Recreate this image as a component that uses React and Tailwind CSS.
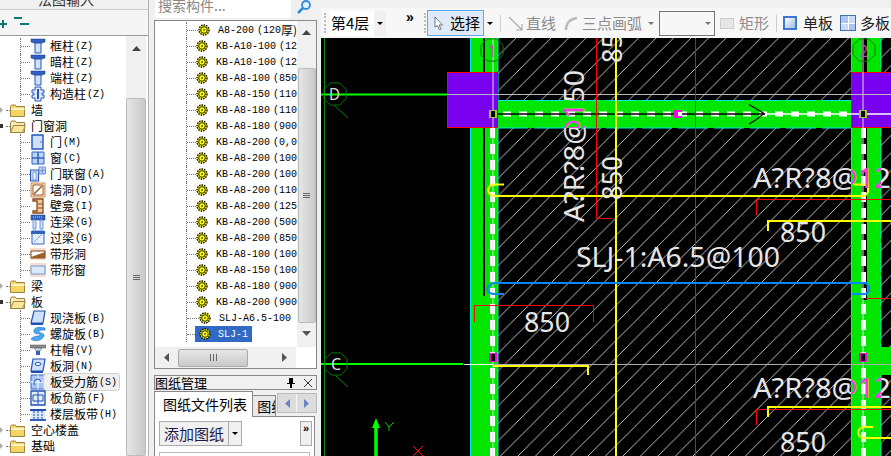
const cjk = "font-['Noto_Sans_CJK_SC',sans-serif]"
const mono = "font-['Liberation_Mono','Noto_Sans_CJK_SC',monospace]"

function Col() {
  return (
    <svg width="16" height="16" viewBox="0 0 16 16">
      <path d="M1 1h14v3l-3 1H4L1 4z" fill="#2f62c0" stroke="#16357f" strokeWidth=".5" />
      <path d="M5 5h6v10H5z" fill="#cfe0fa" stroke="#2556b8" />
    </svg>
  )
}

function Icon({ type }) {
  if (type === 'col') return <Col />
  if (type === 'gz') return (
    <svg width="16" height="16" viewBox="0 0 16 16">
      <path d="M5 1h6v3h3v3h-2v2h2v3h-3v3H5v-3H2V9h2V7H2V4h3z" fill="#dfe9fb" stroke="#2556b8" />
      <path d="M8 3v10" stroke="#2556b8" strokeWidth="2" />
    </svg>
  )
  if (type === 'door') return (
    <svg width="16" height="16" viewBox="0 0 16 16">
      <path d="M2 1h11v14H2z" fill="#cfe0fa" stroke="#2556b8" strokeWidth="1.4" />
      <path d="M10.500 8h1" stroke="#123" />
    </svg>
  )
  if (type === 'win') return (
    <svg width="16" height="16" viewBox="0 0 16 16">
      <path d="M2 2h12v12H2z" fill="#bcd4f7" stroke="#2f62c0" />
      <path d="M8 2v12M2 8h12" stroke="#2f62c0" strokeWidth="1.500" />
    </svg>
  )
  if (type === 'dw') return (
    <svg width="16" height="16" viewBox="0 0 16 16">
      <path d="M0.500 4h8v11h-8z" fill="#d7e5fb" stroke="#2556b8" strokeWidth="1.200" />
      <path d="M3 6h3v8H3z" fill="#fff" stroke="#2556b8" strokeWidth=".6" />
      <path d="M9 1h6.500v7H9z" fill="#bcd4f7" stroke="#6f94d8" />
      <path d="M12.300 1v7M9 4.500h6.500" stroke="#6f94d8" />
    </svg>
  )
  if (type === 'wh') return (
    <svg width="16" height="16" viewBox="0 0 16 16">
      <path d="M1 1h14v14H1z" fill="#f5dcc4" stroke="#c98f5a" />
      <path d="M3 3h10v10H3z" fill="#fff" stroke="#9c5a25" />
      <path d="M4 12l8-8" stroke="#8a5a2a" strokeWidth="1.500" />
    </svg>
  )
  if (type === 'bk') return (
    <svg width="16" height="16" viewBox="0 0 16 16">
      <path d="M3 1h10v14H3v-2h4V3H3z" fill="#f0c9a0" stroke="#8a4a18" strokeWidth="1.300" />
      <path d="M8 6h5M8 10h5" stroke="#8a4a18" />
    </svg>
  )
  if (type === 'll') return (
    <svg width="16" height="16" viewBox="0 0 16 16">
      <path d="M1 1h14v5H1z" fill="#2f62c0" stroke="#16357f" strokeWidth=".5" />
      <path d="M3 6h3v9H3zM10 6h3v9h-3z" fill="#cfe0fa" stroke="#6f94d8" />
      <path d="M3 3h10" stroke="#cfe0fa" strokeDasharray="1 1" />
    </svg>
  )
  if (type === 'gl') return (
    <svg width="16" height="16" viewBox="0 0 16 16">
      <path d="M2 1h12v13H2z" fill="#e8f0fc" stroke="#2f62c0" />
      <path d="M1 1h14v3H1z" fill="#2f62c0" />
      <path d="M4 12l8-8" stroke="#7aa0e0" />
    </svg>
  )
  if (type === 'dxd') return (
    <svg width="16" height="16" viewBox="0 0 16 16">
      <path d="M0 2h16v12H0z" fill="#f7dcc8" />
      <path d="M1 5h14v7H1z" fill="#fff" stroke="#7a4a20" />
      <path d="M1 11l14-5v6H1z" fill="#9c5f2c" />
    </svg>
  )
  if (type === 'dxc') return (
    <svg width="16" height="16" viewBox="0 0 16 16">
      <path d="M0 1h16v14H0z" fill="#f7dcd0" />
      <path d="M1 4h14v8H1z" fill="#dce9fb" stroke="#6f94d8" />
    </svg>
  )
  if (type === 'xjb') return (
    <svg width="16" height="16" viewBox="0 0 16 16">
      <path d="M4 1h11l-2 12H1z" fill="#cfe0fa" stroke="#1f4fb0" strokeWidth="1.200" />
      <path d="M1 13h12v2H1z" fill="#1f4fb0" />
    </svg>
  )
  if (type === 'lxb') return (
    <svg width="16" height="16" viewBox="0 0 16 16">
      <path d="M15 2C8 0 3 2 4 6c1 3 6 1 6 3 0 2-6 0-9 4 3 3 11 2 13-3 1-3-5-3-5-4 0-2 3-2 6-2z" fill="#4aa6ee" stroke="#1f6fc8" strokeWidth=".6" />
    </svg>
  )
  if (type === 'zm') return (
    <svg width="16" height="16" viewBox="0 0 16 16">
      <path d="M0 3h16v3H0z" fill="#8a8a8a" stroke="#555" strokeWidth=".5" />
      <path d="M4 6h8l-2 3H6z" fill="#c8d4ea" stroke="#555" strokeWidth=".5" />
      <path d="M6 9h4v4H6z" fill="#2f62c0" />
    </svg>
  )
  if (type === 'bd') return (
    <svg width="16" height="16" viewBox="0 0 16 16">
      <path d="M3 1h12l-2 12H1z" fill="#cfe0fa" stroke="#1f4fb0" strokeWidth="1.200" />
      <ellipse cx="8" cy="6" rx="3" ry="1.500" fill="#fff" stroke="#1f4fb0" />
      <path d="M1 13h12v2H1z" fill="#1f4fb0" />
    </svg>
  )
  if (type === 'bs') return (
    <svg width="16" height="16" viewBox="0 0 16 16">
      <path d="M1 1h14v14H1z" fill="#a9c6f3" stroke="#2f62c0" />
      <path d="M1 8h14M8 1v14" stroke="#eaf1fd" strokeWidth="1.300" />
      <path d="M5 11a3.500 3.500 0 1 1 6-3" fill="none" stroke="#1f4fb0" />
    </svg>
  )
  if (type === 'bf') return (
    <svg width="16" height="16" viewBox="0 0 16 16">
      <path d="M1 1h14v14H1z" fill="#e3edfc" stroke="#1f4fb0" strokeWidth="1.300" />
      <path d="M3 5h10v6H3zM8 2v12" fill="none" stroke="#1f4fb0" />
    </svg>
  )
  return (
    <svg width="16" height="16" viewBox="0 0 16 16">
      <path d="M0 3h16v2H0z" fill="#1f4fb0" />
      <path d="M0 13h16v2H0z" fill="#2f62c0" />
      <path d="M1 5h14v8H1z" fill="#dce9fb" />
      <path d="M4 5v8M8 5v8M12 5v8" stroke="#1f4fb0" strokeDasharray="2 1" />
    </svg>
  )
}

function Folder({ open }) {
  return (
    <svg width="16" height="13" viewBox="0 0 16 13">
      <path d="M0.500 2.500l1-1.500h4l1 1.500h8v10h-14z" fill={open ? '#f9e7b0' : '#f6d565'} stroke="#9a8448" />
      {open ? <path d="M0.500 12.500l3-7h12l-3 7z" fill="#fbe49a" stroke="#9a8448" /> : <path d="M1.500 4h13v2h-13z" fill="#fdf2c4" />}
    </svg>
  )
}

function Gear() {
  return (
    <svg width="12" height="12" viewBox="0 0 12 12">
      <circle cx="6" cy="6" r="5" fill="#ffff00" stroke="#000" strokeWidth="1.300" strokeDasharray="1.500 1" />
      <circle cx="6" cy="6" r="3.300" fill="#ffff00" stroke="#222" />
      <circle cx="6" cy="6" r="1" fill="#555" />
    </svg>
  )
}

function Tri({ dir = 'down', color = '#333' }) {
  const d = { up: 'M0 5L4.500 0 9 5z', down: 'M0 0L4.500 5 9 0z', left: 'M5 0v9L0 4.500z', right: 'M0 0v9l5-4.500z' }[dir]
  return (
    <svg width={dir === 'left' || dir === 'right' ? 5 : 9} height={dir === 'left' || dir === 'right' ? 9 : 5} viewBox={dir === 'left' || dir === 'right' ? '0 0 5 9' : '0 0 9 5'}>
      <path d={d} fill={color} />
    </svg>
  )
}

function Caret({ color = 'border-t-black' }) {
  return <span className={`w-0 h-0 border-x-[3px] border-x-transparent border-t-[3px] ${color}`} />
}

const Grip = () => (
  <span className="flex flex-col gap-[1px] w-[7px] items-center">
    <span className="w-[7px] h-[1px] bg-[#666]" />
    <span className="w-[7px] h-[1px] bg-[#666]" />
    <span className="w-[7px] h-[1px] bg-[#666]" />
  </span>
)

const leftTree = [
  { c: 1, icon: 'col', name: '框柱', key: '(Z)' },
  { c: 1, icon: 'col', name: '暗柱', key: '(Z)' },
  { c: 1, icon: 'col', name: '端柱', key: '(Z)' },
  { c: 1, icon: 'gz', name: '构造柱', key: '(Z)' },
  { name: '墙' },
  { name: '门窗洞', open: true },
  { c: 1, icon: 'door', name: '门', key: '(M)' },
  { c: 1, icon: 'win', name: '窗', key: '(C)' },
  { c: 1, icon: 'dw', name: '门联窗', key: '(A)' },
  { c: 1, icon: 'wh', name: '墙洞', key: '(D)' },
  { c: 1, icon: 'bk', name: '壁龛', key: '(I)' },
  { c: 1, icon: 'll', name: '连梁', key: '(G)' },
  { c: 1, icon: 'gl', name: '过梁', key: '(G)' },
  { c: 1, icon: 'dxd', name: '带形洞' },
  { c: 1, icon: 'dxc', name: '带形窗' },
  { name: '梁' },
  { name: '板', open: true },
  { c: 1, icon: 'xjb', name: '现浇板', key: '(B)' },
  { c: 1, icon: 'lxb', name: '螺旋板', key: '(B)' },
  { c: 1, icon: 'zm', name: '柱帽', key: '(V)' },
  { c: 1, icon: 'bd', name: '板洞', key: '(N)' },
  { c: 1, icon: 'bs', name: '板受力筋', key: '(S)', hot: true },
  { c: 1, icon: 'bf', name: '板负筋', key: '(F)' },
  { c: 1, icon: 'ld', name: '楼层板带', key: '(H)' },
  { name: '空心楼盖' },
  { name: '基础' },
]

const midTree = [
  ['A8-200', '(120', '厚)'],
  ['KB-A10-100', '(12'],
  ['KB-A10-100', '(12'],
  ['KB-A8-100', '(850'],
  ['KB-A8-150', '(110'],
  ['KB-A8-180', '(110'],
  ['KB-A8-180', '(900'],
  ['KB-A8-200', '(0,0'],
  ['KB-A8-200', '(100'],
  ['KB-A8-200', '(100'],
  ['KB-A8-200', '(110'],
  ['KB-A8-200', '(125'],
  ['KB-A8-200', '(500'],
  ['KB-A8-200', '(850'],
  ['KB-A8-100', '(100'],
  ['KB-A8-150', '(100'],
  ['KB-A8-180', '(900'],
  ['KB-A8-200', '(900'],
  ['SLJ-A6.5-100', ''],
]

function LeftRow({ row }) {
  if (row.c) {
    return (
      <div className="h-[16px] ml-[20px] flex items-center border-l border-dotted border-[#777]">
        <span className="w-[9px] border-t border-dotted border-[#777]" />
        <span className="w-[16px] h-[16px] shrink-0"><Icon type={row.icon} /></span>
        <span className={`ml-[-2px] pl-[6px] pr-[2px] h-[16px] flex items-center whitespace-nowrap rounded-[2px] ${row.hot ? 'bg-[#f0f0f0] outline outline-[#d0d0d0]' : ''}`}>
          <span className={`${cjk} text-[12px] text-black`}>{row.name}</span>
          {row.key && <span className={`${mono} text-[10px] ml-[1px] text-black`}>{row.key}</span>}
        </span>
      </div>
    )
  }
  return (
    <div className="h-[16px] flex items-center">
      <span className="w-[3px] flex justify-start">
        {row.open
          ? <span className="w-[3px] h-[4px] bg-[#333]" />
          : <span className="w-0 h-0 border-y-[3px] border-y-transparent border-l-[3px] border-l-[#aaa]" />}
      </span>
      <span className="w-[4px] ml-[3px] border-t border-dotted border-[#777]" />
      <span className="w-[16px] h-[13px] shrink-0"><Folder open={row.open} /></span>
      <span className={`${cjk} text-[12px] text-black ml-[5px] whitespace-nowrap`}>{row.name}</span>
    </div>
  )
}

function LeftPanel() {
  return (
    <div className="w-[149px] h-[456px] shrink-0 flex flex-col border-r border-[#b0b0b0]">
      <div className="h-[10px] relative overflow-hidden border-b border-[#ccc] bg-[#f0f0f0]">
        <div className={`${cjk} absolute top-[-11px] left-[38px] text-[14px] text-[#333] whitespace-nowrap`}>法图输入</div>
      </div>
      <div className="h-[26px] bg-[#f5f5f5] flex items-center shrink-0 border-b border-[#999]">
        <svg width="32" height="16" viewBox="0 0 32 16">
          <path d="M3 8v8M0 12h7" stroke="#0c7a72" strokeWidth="2" transform="translate(0 -3)" />
          <path d="M14 3h8M20 9h9" stroke="#0c7a72" strokeWidth="2" />
        </svg>
      </div>
      <div className="flex-1 flex bg-white overflow-hidden">
        <div className="flex-1 pt-[2px] overflow-hidden">
          {leftTree.map((row) => <LeftRow key={row.name} row={row} />)}
        </div>
        <div className="w-[20px] mr-[2px] flex flex-col items-center bg-[#f0f0f0]">
          <span className="mt-[10px]"><Tri dir="up" color="#444" /></span>
          <div className="mt-[47px] w-[20px] flex-1 flex items-center justify-center rounded-[2px] border border-[#bbb] bg-gradient-to-r from-[#e6e6e6] to-[#c9c9c9]">
            <Grip />
          </div>
        </div>
      </div>
    </div>
  )
}

function MidPanel() {
  return (
    <div className="w-[163px] ml-[5px] shrink-0 flex flex-col">
      <div className="h-[20px] flex shrink-0">
        <div className={`${cjk} ml-[1px] w-[136px] h-[18px] bg-white text-[14px] leading-[11px] text-[#888] rounded-b-[2px] pl-[3px] overflow-hidden`}>搜索构件...</div>
        <div className="flex-1 flex justify-center items-start">
          <svg width="15" height="14" viewBox="0 0 15 14">
            <circle cx="9" cy="5" r="4" fill="#dff0ff" stroke="#2e8ad8" strokeWidth="1.800" />
            <path d="M6 8l-5 5" stroke="#2e8ad8" strokeWidth="2.500" />
          </svg>
        </div>
      </div>
      <div className="h-[349px] border border-[#888] flex flex-col shrink-0 bg-white w-[163px]">
        <div className="flex-1 flex overflow-hidden">
          <div className="w-[142px] pt-[1px] overflow-hidden">
            {midTree.map((row, idx) => (
              <div key={idx} className="h-[16px] ml-[31px] flex items-center border-l border-dotted border-[#777] whitespace-nowrap">
                <span className="w-[12px] border-t border-dotted border-[#777]" />
                <span className="w-[12px] h-[12px] shrink-0"><Gear /></span>
                <span className={`${mono} text-[10px] text-black ml-[8px] flex items-center`}>
                  <span>{row[0]}</span>
                  {row[1] && <span className="ml-[3px]">{row[1]}</span>}
                  {row[2] && <span className={`${cjk} text-[12px]`}>{row[2]}</span>}
                </span>
              </div>
            ))}
            <div className="h-[16px] ml-[31px] flex items-center border-l border-dotted border-[#777] whitespace-nowrap">
              <span className="w-[8px] border-t border-dotted border-[#777]" />
              <span className="w-[57px] h-[16px] bg-[#316ac5] flex items-center pl-[4px]">
                <span className="w-[12px] h-[12px] shrink-0"><Gear /></span>
                <span className={`${mono} text-[10px] text-white ml-[7px]`}>SLJ-1</span>
              </span>
            </div>
          </div>
          <div className="flex-1 flex flex-col items-center bg-[#f0f0f0]">
            <span className="mt-[9px]"><Tri dir="up" color="#444" /></span>
            <div className="mt-[33px] w-[18px] h-[255px] flex items-center justify-center rounded-[2px] border border-[#bbb] bg-gradient-to-r from-[#e6e6e6] to-[#c9c9c9]">
              <Grip />
            </div>
            <span className="mt-[8px]"><Tri dir="down" color="#555" /></span>
          </div>
        </div>
        <div className="h-[21px] flex items-center bg-[#f0f0f0] shrink-0 mr-[20px]">
          <span className="ml-[9px] mr-[9px]"><Tri dir="left" color="#555" /></span>
          <div className="w-[70px] h-[18px] rounded-[2px] border border-[#aaa] bg-gradient-to-b from-[#e6e6e6] to-[#c9c9c9] flex items-center justify-center gap-[2px]">
            <span className="w-[1px] h-[7px] bg-[#666]" />
            <span className="w-[1px] h-[7px] bg-[#666]" />
            <span className="w-[1px] h-[7px] bg-[#666]" />
          </div>
          <span className="ml-[34px]"><Tri dir="right" color="#555" /></span>
        </div>
      </div>
      <div className="mt-[6px] h-[15px] w-[163px] border border-[#888] flex items-center shrink-0 relative">
        <span className={`${cjk} text-[13px] leading-[13px] text-black`}>图纸管理</span>
        <svg className="ml-auto mr-[9px]" width="8" height="10" viewBox="0 0 8 10">
          <path d="M2 0h4v5h2v1H5v4H3V6H0V5h2z" fill="#000" />
        </svg>
        <svg className="mr-[4px]" width="8" height="8" viewBox="0 0 8 8">
          <path d="M0 0l8 8M8 0L0 8" stroke="#333" />
        </svg>
      </div>
      <div className="flex h-[26px] mt-[1px] shrink-0 w-[163px]">
        <div className={`${cjk} w-[100px] h-[26px] bg-white border border-b-0 border-[#888] text-[14px] leading-[24px] pl-[8px] text-black relative z-10 whitespace-nowrap`}>图纸文件列表</div>
        <div className={`${cjk} w-[23px] h-[21px] mt-[4px] border-t border-r border-[#888] bg-[#e8e8e8] text-[14px] leading-[20px] pl-[4px] overflow-hidden whitespace-nowrap text-black`}>图纸</div>
        <div className="flex ml-[1px] mt-[2px] h-[20px] border border-[#bbb] bg-[#dcdcdc]">
          <span className="w-[19px] flex items-center justify-center border-r border-[#f5f5f5]"><Tri dir="left" color="#6c83c0" /></span>
          <span className="w-[19px] flex items-center justify-center"><Tri dir="right" color="#6c83c0" /></span>
        </div>
      </div>
      <div className="flex-1 w-[161px] border border-[#888] border-b-0 -mt-[1px] bg-white px-[4px] pt-[4px] overflow-hidden">
        <div className="flex justify-between">
          <div className="h-[25px] w-[83px] flex items-stretch border border-[#aaa] bg-[#f0f0f0]">
            <span className={`${cjk} w-[69px] text-[15px] leading-[23px] text-center text-[#1b1b4b] border-r border-[#aaa]`}>添加图纸</span>
            <span className="flex-1 flex items-center justify-center"><Caret /></span>
          </div>
          <div className="h-[25px] w-[12px] border border-[#aaa] bg-[#f0f0f0] text-[11px] leading-[12px] font-bold text-black font-['Liberation_Sans',sans-serif] text-center mr-[-2px]">»</div>
        </div>
        <div className="mt-[6px] h-[6px] border border-[#bbb]" />
      </div>
    </div>
  )
}

function ToolText({ children, className = '' }) {
  return <span className={`${cjk} text-[15px] leading-[20px] whitespace-nowrap ${className}`}>{children}</span>
}

function Toolbar() {
  return (
    <div className="h-[38px] shrink-0 flex flex-col bg-[#f0f0f0]">
      <div className="h-[8px] bg-[#f0f0f0]" />
      <div className="h-[30px] flex items-center bg-[#f7f7f7]">
        <span className="ml-[3px] w-[2px] h-[20px] border-l-2 border-dotted border-[#bbb]" />
        <div className="ml-[3px] w-[57px] h-[25px] bg-white flex items-center">
          <span className={`${cjk} pl-[2px] text-[15px] text-black flex-1 whitespace-nowrap`}>第4层</span>
          <span className="w-[12px] h-[25px] bg-[#f0f0f0] flex items-center justify-center"><Caret /></span>
        </div>
        <span className="ml-[20px] mb-[12px] w-[10px] text-[14px] leading-[12px] font-bold text-black font-['Liberation_Sans',sans-serif]">»</span>
        <span className="ml-[8px] w-[2px] h-[20px] border-l-2 border-dotted border-[#bbb]" />
        <div className="ml-[1px] w-[57px] h-[26px] border border-[#5ba8f0] bg-[#deeaf7] flex items-center">
          <svg className="ml-[6px]" width="10" height="14" viewBox="0 0 10 14">
            <path d="M1 1l7.500 8H5l2 4-1.500.6-2-4L1 11z" fill="#fff" stroke="#555" strokeWidth=".8" />
          </svg>
          <ToolText className="ml-[6px] text-black">选择</ToolText>
        </div>
        <span className="ml-[3px] flex"><Caret /></span>
        <span className="ml-[7px] w-[1px] h-[17px] bg-[#ccc]" />
        <svg className="ml-[7px]" width="15" height="15" viewBox="0 0 15 15">
          <path d="M1 1l13 13M14 8v6H8" fill="none" stroke="#aaa" strokeWidth="1.200" />
        </svg>
        <ToolText className="ml-[3px] text-[#8c8c8c]">直线</ToolText>
        <svg className="ml-[8px]" width="15" height="15" viewBox="0 0 15 15">
          <path d="M2 14C2 7 6 3 13 2" fill="none" stroke="#bbb" strokeWidth="2.500" />
        </svg>
        <ToolText className="ml-[3px] text-[#8c8c8c]">三点画弧</ToolText>
        <span className="ml-[6px] flex"><Caret color="border-t-[#777]" /></span>
        <div className="ml-[5px] w-[56px] h-[25px] border border-[#777] bg-[#f7f7f7] flex items-center justify-end pr-[3px]"><Caret color="border-t-[#777]" /></div>
        <span className="ml-[5px] w-[14px] h-[11px] border border-[#ccc] bg-[#e6e6e6]" />
        <ToolText className="ml-[5px] text-[#8c8c8c]">矩形</ToolText>
        <span className="ml-[7px] w-[1px] h-[17px] bg-[#ccc]" />
        <span className="ml-[6px] w-[14px] h-[14px] border-2 border-[#3f76cf] bg-gradient-to-br from-white to-[#9dbbe8]" />
        <ToolText className="ml-[6px] text-[#222]">单板</ToolText>
        <span className="ml-[7px] w-[16px] h-[16px] grid grid-cols-2 gap-[1px] border border-[#4a6fa8] bg-white">
          <span className="bg-[#a9c6f3]" />
          <span className="bg-[#c8dbf7]" />
          <span className="bg-[#c8dbf7]" />
          <span className="bg-[#a9c6f3]" />
        </span>
        <ToolText className="ml-[4px] text-[#222]">多板</ToolText>
      </div>
    </div>
  )
}

function Octagon({ cx, cy }) {
  const pts = [...Array(8)].map((_, i) => {
    const a = (Math.PI / 8) * (2 * i + 1)
    return `${cx + 12 * Math.cos(a)},${cy + 12 * Math.sin(a)}`
  }).join(' ')
  return <polygon points={pts} fill="none" stroke="#0a7a0a" />
}

function Label({ x, y, w, size = 27, rotate, fill = '#e6e6e6', children }) {
  return (
    <text
      x={x}
      y={y}
      fontSize={size}
      fill={fill}
      textLength={w}
      lengthAdjust="spacingAndGlyphs"
      transform={rotate ? `rotate(-90 ${x} ${y})` : undefined}
      fontFamily="Noto Sans"
    >
      {children}
    </text>
  )
}

function Canvas() {
  const cyan = '#00e5e5'
  const yellow = '#ffff00'
  const blue = '#0a84ff'
  const red = '#ff0000'
  const magenta = '#ff30e0'
  return (
    <svg className="block shrink-0" width="570" height="418" viewBox="321 38 570 418">
      <defs>
        <pattern id="hatch" patternUnits="userSpaceOnUse" x="11.500" y="0" width="17.500" height="17.500">
          <path d="M-1 18.500L18.500 -1" stroke="#c4c4c4" strokeWidth="1" shapeRendering="crispEdges" />
        </pattern>
        <clipPath id="topBeam"><rect x="498" y="100" width="353" height="28" /></clipPath>
        <clipPath id="rightBeam"><rect x="851" y="38" width="30" height="418" /></clipPath>
      </defs>
      <rect x="321" y="38" width="570" height="418" fill="#000" />
      <rect x="498" y="38" width="353" height="418" fill="url(#hatch)" />
      <rect x="881" y="38" width="10" height="418" fill="url(#hatch)" />

      <path d="M324.500 38V456" stroke="#0a8a0a" />

      {/* left beam */}
      <rect x="470" y="38" width="28" height="418" fill="#00e600" />
      <rect x="483" y="38" width="2" height="258" fill="#000" />
      <path d="M470.500 38V456M498 38V456" stroke={cyan} />
      <path d="M492.500 128V456" stroke="#fff" strokeWidth="5" strokeDasharray="10 6" />
      <path d="M493 38V456" stroke="#ddd" />

      {/* right beam */}
      <rect x="851" y="38" width="30" height="418" fill="#00e600" />
      <rect x="862" y="38" width="5" height="262" fill="#000" />
      <rect x="881" y="347" width="10" height="28" fill="#00e600" />
      <path d="M851.500 38V456" stroke={cyan} strokeDasharray="32 3" />
      <path d="M881 38V347M881 375V456" stroke={cyan} strokeDasharray="30 4" />
      <path d="M863.500 128V456" stroke="#fff" strokeWidth="5" strokeDasharray="10 6" />
      <path d="M863 38V456" stroke="#ddd" />

      {/* top beam */}
      <rect x="498" y="100" width="353" height="28" fill="#00e600" />
      <path d="M498 100.500H851M498 128H851" stroke={cyan} strokeDasharray="30 6" />
      <path d="M503 114H851" stroke="#fff" strokeWidth="5" strokeDasharray="8 8" />
      <path d="M498 114H765" stroke="#000" strokeWidth="1.500" />
      <path d="M765 114H851" stroke="#fff" strokeWidth="1.500" />
      <path d="M749 104.500C755 108 760 111 764 113.500C760 117 755 121 749 124" fill="none" stroke="#000" strokeWidth="1.300" />

      {/* reference lines */}
      <path d="M464 94.500H891M464 364.500H891" stroke="#aaa" />
      <path d="M321 94.500H463M321 364H463" stroke="#00ff00" strokeWidth="2" />
      <path d="M464 94.500H493M464 364.500H493" stroke="#fff" />

      {/* columns */}
      <rect x="447.500" y="72.500" width="50" height="55" fill="#7a00f0" stroke={red} />
      <path d="M497.500 72V128" stroke="#7a00f0" />
      <rect x="851.500" y="72.500" width="50" height="55" fill="#7a00f0" stroke={red} />
      <path d="M493 72V128M863 72V128" stroke="#ddd" />
      <path d="M447 94.500H891" stroke="#bbb" />
      <path d="M851 114H891" stroke="#fff" strokeWidth="1.500" />

      {/* axis bubbles */}
      <Octagon cx={335} cy={94} />
      <path d="M335 106L348 118" stroke="#0a8a0a" />
      <Octagon cx={336} cy={364} />
      <path d="M336 376L348 387" stroke="#0a8a0a" />
      <Octagon cx={492} cy={50} />
      <Octagon cx={864} cy={50} />
      <Label x={329} y={100} w={11} size={17} fill="#ddd">D</Label>
      <Label x={331} y={370} w={10} size={17} fill="#ddd">C</Label>
      <Label x={488} y={57} w={8} size={17} fill="#c04bc0">1</Label>
      <Label x={860} y={57} w={8} size={17} fill="#c04bc0">2</Label>

      {/* red lines */}
      <path d="M596.500 38V218.500H612M695.500 38V456" fill="none" stroke={red} />
      <path d="M756.500 215V199.500H891M474.500 322V305.500H593.500V322M756.500 425V409.500H891M866 298.500H891" fill="none" stroke={red} />

      {/* yellow and blue bars */}
      <path d="M616 38V456" stroke={yellow} strokeWidth="2" />
      <path d="M504 184.500H495C486 184.500 486 196 495 196H865L868 192V184.500H853" fill="none" stroke={yellow} strokeWidth="2" />
      <path d="M768 231V221H891M768 417V407H891" fill="none" stroke={yellow} strokeWidth="2" />
      <path d="M493 366H588V375" fill="none" stroke={yellow} strokeWidth="2" />
      <path d="M873 427H865C856 427 856 438 865 438H891" fill="none" stroke={yellow} strokeWidth="2" />
      <path d="M504 294H494C484 294 486 283 496 283H866L869 287V291L866 294H852" fill="none" stroke={blue} strokeWidth="2" />

      {/* nodes */}
      <rect x="489" y="110" width="8" height="8" fill="#9acd32" />
      <rect x="491" y="111" width="4" height="6" fill="#000" />
      <rect x="859" y="110" width="8" height="8" fill="#9acd32" />
      <rect x="861" y="111" width="4" height="6" fill="#000" />
      <rect x="674" y="110" width="8" height="8" fill="#ff00e0" />
      <rect x="678" y="112" width="4" height="4" fill="#fff" />
      <rect x="489" y="353" width="8" height="9" fill="#ff00e0" />
      <rect x="491" y="354" width="4" height="7" fill="#000" />
      <rect x="859" y="353" width="8" height="9" fill="#ff00e0" />
      <rect x="861" y="354" width="4" height="7" fill="#000" />

      {/* text */}
      <Label x={584} y={222} w={152} rotate>A?R?8@150</Label>
      <Label x={622} y={200} w={44} rotate>850</Label>
      <Label x={622} y={63} w={44} rotate>850</Label>
      <Label x={576} y={267} w={204}>SLJ-1:A6.5@100</Label>
      <Label x={753} y={188} w={138}>A?R?8@12</Label>
      <Label x={753} y={398} w={138}>A?R?8@12</Label>
      <Label x={780} y={242} w={46}>850</Label>
      <Label x={780} y={452} w={46}>850</Label>
      <Label x={524} y={332} w={46}>850</Label>
      <g clipPath="url(#topBeam)">
        <Label x={584} y={222} w={152} rotate fill={magenta}>A?R?8@150</Label>
      </g>
      <g clipPath="url(#rightBeam)">
        <Label x={753} y={188} w={138} fill={magenta}>A?R?8@12</Label>
        <Label x={753} y={398} w={138} fill={magenta}>A?R?8@12</Label>
      </g>

      {/* ucs */}
      <path d="M376 456V424" stroke="#00ff00" strokeWidth="3.500" />
      <path d="M372 428L376 418 380 428z" fill="#00ff00" />
      <path d="M385 422L389 427 394 422M389 427V431" fill="none" stroke="#00cc00" />
      <path d="M413 446L423 456M423 446L413 456" stroke={red} />
    </svg>
  )
}

export default function App() {
  return (
    <div className="w-[891px] h-[456px] flex overflow-hidden bg-[#f0f0f0]">
      <LeftPanel />
      <MidPanel />
      <div className="ml-[4px] flex-1 flex flex-col">
        <Toolbar />
        <Canvas />
      </div>
    </div>
  )
}
